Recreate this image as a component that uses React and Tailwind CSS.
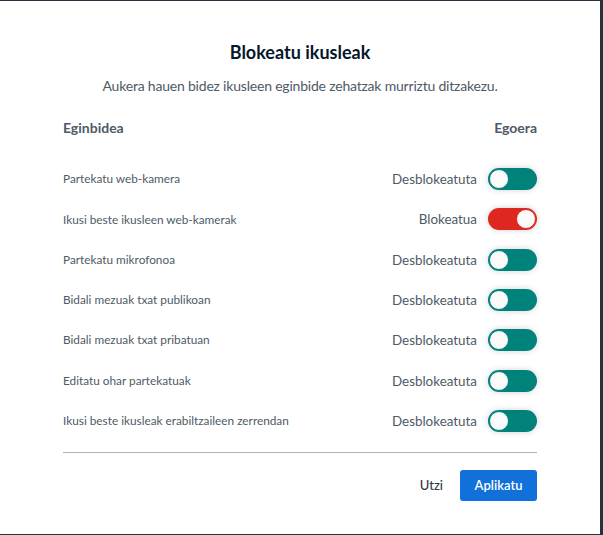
import React from "react";

const rows = [
  ["Partekatu web-kamera", false],
  ["Ikusi beste ikusleen web-kamerak", true],
  ["Partekatu mikrofonoa", false],
  ["Bidali mezuak txat publikoan", false],
  ["Bidali mezuak txat pribatuan", false],
  ["Editatu ohar partekatuak", false],
  ["Ikusi beste ikusleak erabiltzaileen zerrendan", false],
];

function Toggle({ on }) {
  return (
    <div
      className={
        "relative w-[49px] h-[22px] rounded-full shadow-[0_0_6px_rgba(0,0,0,0.18)] " +
        (on ? "bg-[#df2721]" : "bg-[#00827a]")
      }
    >
      <div
        className={
          "absolute top-[1px] w-[20px] h-[20px] rounded-full bg-[#fafafa] border " +
          (on ? "right-[1px] border-[#df2721]" : "left-[1px] border-[#00827a]")
        }
      />
    </div>
  );
}

export default function App() {
  return (
    <div
      className="w-[603px] h-[535px] bg-[#28323f] pt-[1px] overflow-hidden"
      style={{ fontFamily: "Lato, 'Noto Sans', sans-serif" }}
    >
      <div className="w-[600px] h-[533px] bg-white flex flex-col px-[63px]">
        <h1 className="mt-[39px] text-center text-[18px] leading-[24px] font-bold text-[#06172a]">
          Blokeatu ikusleak
        </h1>
        <p className="mt-[12px] text-center text-[14px] tracking-[-0.2px] leading-[20px] text-[#4e5a66]">
          Aukera hauen bidez ikusleen eginbide zehatzak murriztu ditzakezu.
        </p>
        <div className="mt-[23px] flex justify-between text-[14px] leading-[18px] font-bold text-[#4e5a66]">
          <span>Eginbidea</span>
          <span>Egoera</span>
        </div>
        <div className="mt-[22px] flex flex-col">
          {rows.map(([label, on]) => (
            <div key={label} className="h-[40.3px] flex items-center justify-between">
              <span className="text-[11.8px] text-[#4e5a66]">{label}</span>
              <div className="flex items-center gap-[11px]">
                <span className="text-[13.4px] text-[#4e5a66]">
                  {on ? "Blokeatua" : "Desblokeatuta"}
                </span>
                <Toggle on={on} />
              </div>
            </div>
          ))}
        </div>
        <div className="mt-[11px] h-px bg-[#a7b3bd]" />
        <div className="mt-[17px] flex justify-end items-center gap-[17px]">
          <button className="text-[13px] text-[#303a44] font-medium">Utzi</button>
          <button className="w-[77px] h-[31px] rounded-[3px] bg-[#1170d9] text-white text-[13px] font-semibold">
            Aplikatu
          </button>
        </div>
      </div>
    </div>
  );
}
